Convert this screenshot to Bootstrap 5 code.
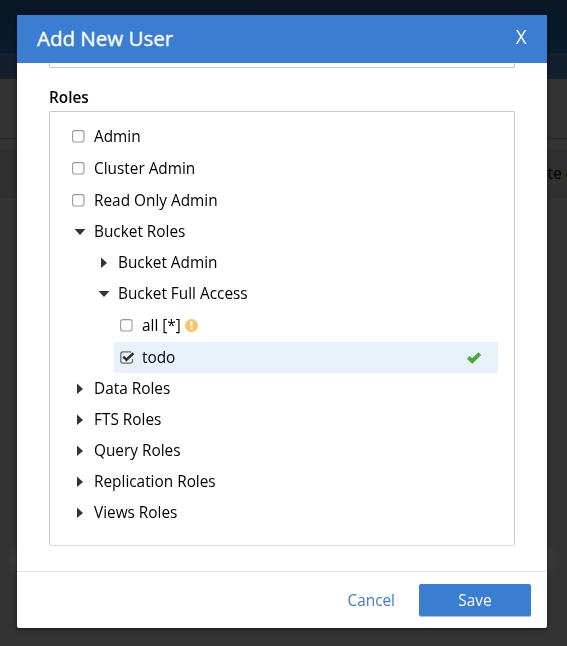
<!DOCTYPE html>
<html lang="en">
<head>
<meta charset="utf-8">
<meta name="viewport" content="width=device-width, initial-scale=1">
<title>Add New User</title>
<link rel="stylesheet" href="https://cdn.jsdelivr.net/npm/bootstrap@5.3.0/dist/css/bootstrap.min.css">
<style>
  body { font-family: "Open Sans", sans-serif; font-size: 15.36px; line-height: 20px; color: #000; background: #333; height: 646px; overflow: hidden; }
  .page-top { height: 53px; background: linear-gradient(#081624, #0a1b2c); }
  .page-sub { height: 26px; background: #141f2e; }
  .page-tools { height: 60px; border-bottom: 1px solid #262626; }
  .page-row { height: 50px; margin-top: 10px; padding: 0 0 0 547.5px; background: #303030; white-space: nowrap; }
  .user-modal { padding: 15px 17px 18px; overflow: hidden; }
  .user-modal .modal-dialog { width: 530px; max-width: none; height: 613px; margin: 0 auto 0 0; }
  .user-modal .modal-content { height: 613px; border: 0; border-radius: 2px; color: #000; box-shadow: 0 1px 4px rgba(0,0,0,.55); }
  .user-modal .modal-header { height: 48px; padding: 0 20px; border: 0; border-radius: 2px 2px 0 0; background: #3b7dd1; color: #fff; flex: none; }
  .user-modal .modal-title { padding-bottom: 2px; font-size: 20.5px; line-height: 46px; font-weight: 500; -webkit-text-stroke: .3px #fff; }
  .close-x { border: 0; padding: 0 0 4px; background: none; color: #fff; font-size: 20px; line-height: 44px; height: 48px; transform: scaleX(.94); transform-origin: right; }
  .user-modal .modal-body { padding: 0 32px; overflow: hidden; }
  .field-end { height: 5px; border: 1px solid #c4c4c4; border-top: 0; border-radius: 0 0 2px 2px; }
  .roles-label { margin-top: 19px; height: 24px; line-height: 21px; font-weight: 600; }
  .roles-box { height: 435px; padding: 8px 16px 0 20px; border: 1px solid #c9c9c9; border-bottom-color: #dcdcdc; border-radius: 2px; }
  .role { height: 31px; padding: 0 0 0 2px; }
  .role-check { margin-top: 1px; }
  .role-mark { width: 22px; flex: none; }
  .role svg { display: block; }
  .lvl-1 { margin-left: 24px; }
  .lvl-2 { margin-left: 44px; padding-left: 6px; }
  .picked { background: #e8f1f9; }
  .warn-icon { margin: 0 0 0 4px; }
  .ok-icon { margin: 0 16px 0 auto; }
  .user-modal .modal-footer { position: relative; height: 57px; padding: 0 16px; border-top: 1px solid #e4e4e4; border-radius: 0 0 2px 2px; flex: none; }
  .user-modal .modal-footer > * { margin: 0; }
  .modal-footer::before { content: ""; position: absolute; left: 0; right: 0; top: -22px; height: 20px; box-shadow: 0 0 16px rgba(255,255,255,.12); pointer-events: none; }
  .cancel-link { color: #3b7dd1; text-decoration: none; padding-top: 2px; }
  .btn-save { width: 112px; height: 32px; padding: 0; border: 0; border-radius: 2px; background: #3b7dd1; color: #fff; font-size: 15.36px; line-height: 31px; box-shadow: 0 1px 1px rgba(0,0,0,.3); }
</style>
</head>
<body>
<div class="page-top"></div>
<div class="page-sub"></div>
<div class="page-tools"></div>
<div class="page-row d-flex align-items-center">te of</div>

<div class="modal user-modal d-block" tabindex="-1" role="dialog">
  <div class="modal-dialog">
    <div class="modal-content">
      <div class="modal-header">
        <h5 class="modal-title">Add New User</h5>
        <button class="close-x" type="button" aria-label="Close">X</button>
      </div>
      <div class="modal-body">
        <div class="field-end"></div>
        <div class="roles-label">Roles</div>
        <div class="roles-box">
          <div class="role role-check d-flex align-items-center"><span class="role-mark"><svg width="13" height="13"><use href="#box"/></svg></span>Admin</div>
          <div class="role role-check d-flex align-items-center"><span class="role-mark"><svg width="13" height="13"><use href="#box"/></svg></span>Cluster Admin</div>
          <div class="role role-check d-flex align-items-center"><span class="role-mark"><svg width="13" height="13"><use href="#box"/></svg></span>Read Only Admin</div>
          <div class="role d-flex align-items-center"><span class="role-mark"><svg width="16" height="13"><use href="#down"/></svg></span>Bucket Roles</div>
          <div class="role lvl-1 d-flex align-items-center"><span class="role-mark"><svg width="16" height="13"><use href="#right"/></svg></span>Bucket Admin</div>
          <div class="role lvl-1 d-flex align-items-center"><span class="role-mark"><svg width="16" height="13"><use href="#down"/></svg></span>Bucket Full Access</div>
          <div class="role role-check lvl-2 d-flex align-items-center"><span class="role-mark"><svg width="13" height="13"><use href="#box"/></svg></span>all [*]
            <svg class="warn-icon" width="13" height="13" viewBox="0 0 13 13"><circle cx="6.5" cy="6.5" r="6.5" fill="#f9c26c"/><path d="M5.3 2.2h2.4l-.3 5.2H5.6zM5.4 8.6h2.2v2H5.4z" fill="#fff"/></svg></div>
          <div class="role role-check lvl-2 picked d-flex align-items-center"><span class="role-mark"><svg width="15" height="13" viewBox="0 0 15 13"><path d="M11 .8H3A2.2 2.2 0 0 0 .8 3v7A2.2 2.2 0 0 0 3 12.200h7.300A2.200 2.200 0 0 0 12.500 10V8" fill="none" stroke="#666" stroke-width="1.200"/><path d="M3.300 5.600L6.500 8.800L13.400 2.200" fill="none" stroke="#333" stroke-width="2.600"/></svg></span>todo
            <svg class="ok-icon" width="16" height="13" viewBox="0 0 16 13"><path d="M2.300 6.600L6.200 10L13.800 2.600" fill="none" stroke="#43ac3a" stroke-width="4"/></svg></div>
          <div class="role d-flex align-items-center"><span class="role-mark"><svg width="16" height="13"><use href="#right"/></svg></span>Data Roles</div>
          <div class="role d-flex align-items-center"><span class="role-mark"><svg width="16" height="13"><use href="#right"/></svg></span>FTS Roles</div>
          <div class="role d-flex align-items-center"><span class="role-mark"><svg width="16" height="13"><use href="#right"/></svg></span>Query Roles</div>
          <div class="role d-flex align-items-center"><span class="role-mark"><svg width="16" height="13"><use href="#right"/></svg></span>Replication Roles</div>
          <div class="role d-flex align-items-center"><span class="role-mark"><svg width="16" height="13"><use href="#right"/></svg></span>Views Roles</div>
        </div>
      </div>
      <div class="modal-footer d-flex justify-content-end">
        <a class="cancel-link me-4" href="#">Cancel</a>
        <button class="btn btn-save" type="button">Save</button>
      </div>
    </div>
  </div>
</div>

<svg width="0" height="0" class="d-block">
  <defs>
    <g id="box"><rect x=".6" y=".6" width="11.400" height="11.400" rx="2.200" fill="#fff" stroke="#999" stroke-width="1.100"/></g>
    <path id="down" d="M2.500 4h11L8 10z" fill="#333"/>
    <path id="right" d="M5 1.500L11 7L5 12z" fill="#333"/>
  </defs>
</svg>
<script src="https://cdn.jsdelivr.net/npm/bootstrap@5.3.0/dist/js/bootstrap.bundle.min.js"></script>
</body>
</html>
